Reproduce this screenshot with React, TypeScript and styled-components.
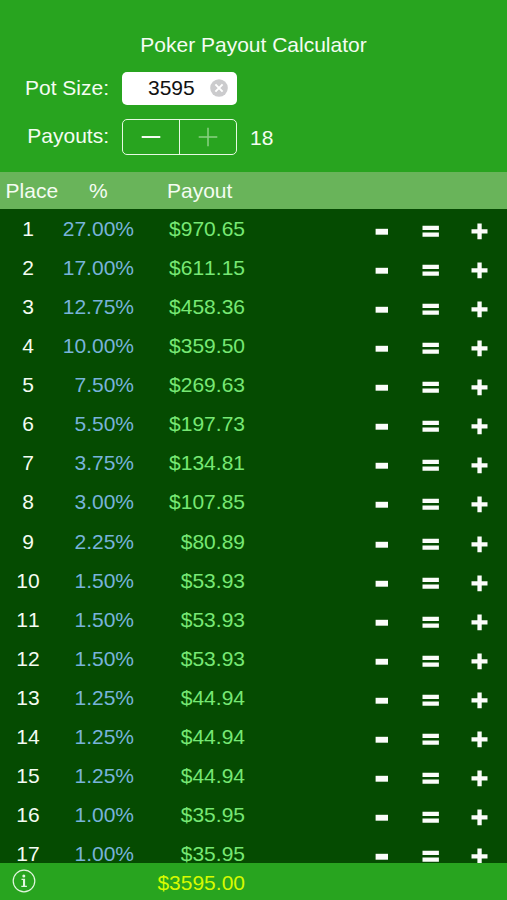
import React, { useState } from "react";
import styled, { createGlobalStyle } from "styled-components";

const GlobalStyle = createGlobalStyle`
  * {
    box-sizing: border-box;
  }

  body {
    margin: 0;
    background-color: #28a41f;
  }
`;

const Screen = styled.main`
  width: 507px;
  height: 900px;
  display: flex;
  flex-direction: column;
  overflow: hidden;
  background-color: #28a41f;
  color: #f4fcf2;
  font-family: "Liberation Sans", Arial, sans-serif;
  font-size: 21px;
  line-height: 24px;
`;

const Header = styled.header`
  height: 172px;
  flex: none;
  padding-top: 33px;
`;

const Title = styled.h1`
  margin: 0;
  font-size: inherit;
  font-weight: normal;
  text-align: center;
`;

const Field = styled.div<{ $height: number; $top: number }>`
  height: ${(props) => props.$height}px;
  margin-top: ${(props) => props.$top}px;
  display: flex;
  align-items: center;
`;

const FieldLabel = styled.span`
  width: 122px;
  padding: 0 13px 2px 0;
  text-align: right;
  white-space: nowrap;
`;

const PotInput = styled.div`
  width: 115px;
  height: 33px;
  padding: 0 9px 1px 26px;
  display: flex;
  align-items: center;
  justify-content: space-between;
  border-radius: 5px;
  background-color: white;
  color: #111;
`;

const ClearButton = styled.button`
  width: 18px;
  height: 18px;
  padding: 0;
  border: none;
  background: none;
  display: flex;
`;

const Stepper = styled.div`
  width: 115px;
  height: 36px;
  display: flex;
  border: 1px solid #e6fae2;
  border-radius: 5px;
`;

const StepperButton = styled.button`
  flex: 1;
  padding: 0;
  display: flex;
  align-items: center;
  justify-content: center;
  border: none;
  background: none;
  color: #f4fcf2;

  & + & {
    border-left: 1px solid #e6fae2;
  }

  &:disabled {
    color: #8bd184;
  }
`;

const PayoutCount = styled.span`
  margin-left: 13px;
  padding-top: 1px;
`;

const ColumnHeadings = styled.div`
  height: 36.5px;
  flex: none;
  display: grid;
  grid-template-columns: 63px 71px 1fr;
  align-items: center;
  padding-top: 2px;
  background-color: #69b45a;
`;

const Heading = styled.span<{ $indent: number }>`
  padding-left: ${(props) => props.$indent}px;
`;

const PayoutList = styled.div`
  height: 654.5px;
  flex: none;
  overflow: hidden;
  background-color: #054b01;
  font-kerning: none;
`;

const Row = styled.div`
  height: 39.07px;
  padding-top: 2px;
  display: grid;
  grid-template-columns: 56px 78px 111px 112px 49px 49px 49px;
  align-items: center;
`;

const Place = styled.span`
  text-align: center;
`;

const Percent = styled.span`
  text-align: right;
  color: #78b3da;
`;

const Amount = styled.span`
  text-align: right;
  color: #77e874;
`;

const AdjustButton = styled.button<{ $column: number }>`
  grid-column: ${(props) => props.$column};
  padding: 4px 0 0;
  display: flex;
  justify-content: center;
  border: none;
  background: none;
  color: #fbfdfa;
`;

const Footer = styled.footer`
  height: 37px;
  flex: none;
  display: grid;
  grid-template-columns: 56px 189px;
  align-items: center;
`;

const InfoButton = styled.button`
  padding: 0 0 1px 12px;
  display: flex;
  border: none;
  background: none;
  color: #e2f6df;
`;

const Total = styled.span`
  padding-top: 2px;
  text-align: right;
  color: #d7fb00;
`;

const POT_SIZE = "3595";
const MAX_PAYOUTS = 18;

const payouts = [
  ["27.00%", "$970.65"],
  ["17.00%", "$611.15"],
  ["12.75%", "$458.36"],
  ["10.00%", "$359.50"],
  ["7.50%", "$269.63"],
  ["5.50%", "$197.73"],
  ["3.75%", "$134.81"],
  ["3.00%", "$107.85"],
  ["2.25%", "$80.89"],
  ["1.50%", "$53.93"],
  ["1.50%", "$53.93"],
  ["1.50%", "$53.93"],
  ["1.25%", "$44.94"],
  ["1.25%", "$44.94"],
  ["1.25%", "$44.94"],
  ["1.00%", "$35.95"],
  ["1.00%", "$35.95"],
];

const adjustments = [
  { label: "Decrease", column: 5, path: "M3.6 7.8h12.4v5.9H3.6z" },
  { label: "Equalize", column: 6, path: "M1.5 4.7h16.4v4.2H1.5zM1.5 11.5h16.4v4.2H1.5z" },
  {
    label: "Increase",
    column: 7,
    path: "M7.4 2.4h4.3v5.8h5.8v4.2h-5.8v5.9H7.4v-5.9H1.5V8.2h5.9z",
  },
];

const PayoutRow = ({ place, percent, amount }: { place: number; percent: string; amount: string }) => {
  return (
    <Row>
      <Place>{place}</Place>
      <Percent>{percent}</Percent>
      <Amount>{amount}</Amount>
      {adjustments.map(({ label, column, path }) => (
        <AdjustButton key={label} $column={column} aria-label={label}>
          <svg width="20" height="20" viewBox="0 0 20 20" fill="currentColor">
            <path d={path} />
          </svg>
        </AdjustButton>
      ))}
    </Row>
  );
};

const App = () => {
  const [pot, setPot] = useState(POT_SIZE);
  const [count, setCount] = useState(MAX_PAYOUTS);

  return (
    <>
      <GlobalStyle />
      <Screen>
        <Header>
          <Title>Poker Payout Calculator</Title>
          <Field $height={33} $top={15}>
            <FieldLabel>Pot Size:</FieldLabel>
            <PotInput>
              <span>{pot}</span>
              <ClearButton aria-label="Clear" onClick={() => setPot("")}>
                <svg width="18" height="18" viewBox="0 0 18 18">
                  <circle cx="9" cy="9" r="8.8" fill="#cbcbcd" />
                  <path d="M5.4 5.4l7.2 7.2M12.6 5.4l-7.2 7.2" stroke="white" strokeWidth="2" />
                </svg>
              </ClearButton>
            </PotInput>
          </Field>
          <Field $height={36} $top={14}>
            <FieldLabel>Payouts:</FieldLabel>
            <Stepper>
              <StepperButton aria-label="Fewer" onClick={() => setCount(Math.max(1, count - 1))}>
                <svg width="20" height="20" viewBox="0 0 20 20" fill="none" stroke="currentColor">
                  <path d="M0.7 10h18.6" strokeWidth="2" />
                </svg>
              </StepperButton>
              <StepperButton
                aria-label="More"
                disabled={count >= MAX_PAYOUTS}
                onClick={() => setCount(count + 1)}
              >
                <svg width="20" height="20" viewBox="0 0 20 20" fill="none" stroke="currentColor">
                  <path d="M0.7 10h18.6M10 0.7v18.6" strokeWidth="1.5" />
                </svg>
              </StepperButton>
            </Stepper>
            <PayoutCount>{count}</PayoutCount>
          </Field>
        </Header>
        <ColumnHeadings>
          <Heading $indent={5.6}>Place</Heading>
          <Heading $indent={26}>%</Heading>
          <Heading $indent={33}>Payout</Heading>
        </ColumnHeadings>
        <PayoutList>
          {payouts.slice(0, count).map(([percent, amount], index) => (
            <PayoutRow key={index} place={index + 1} percent={percent} amount={amount} />
          ))}
        </PayoutList>
        <Footer>
          <InfoButton aria-label="Info">
            <svg width="24" height="24" viewBox="0 0 24 24" fill="none" stroke="currentColor">
              <circle cx="12" cy="12" r="10.8" strokeWidth="1.2" />
              <circle cx="11.8" cy="7" r="1.5" fill="currentColor" stroke="none" />
              <path d="M9.5 10.3h3v6.9M9.3 17.4h5.6" strokeWidth="1.2" />
              <path d="M12 10.3v7" strokeWidth="2" />
            </svg>
          </InfoButton>
          <Total>$3595.00</Total>
        </Footer>
      </Screen>
    </>
  );
};

export default App;
